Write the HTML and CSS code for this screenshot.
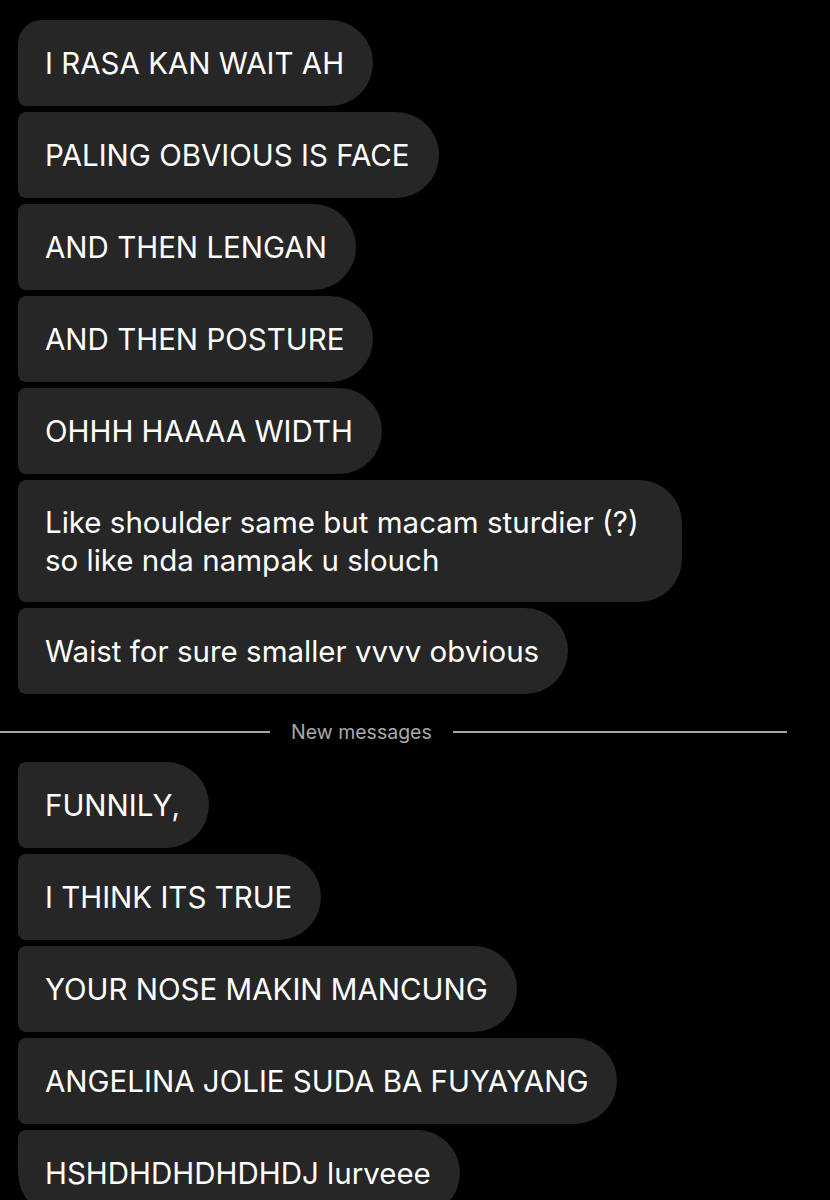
FILE: index.html
```html
<!DOCTYPE html>
<html>
<head>
    <title>Chat</title>
    <link rel="stylesheet" href="styles.css">
</head>
<body>
    <div class="thread">
        <div class="group">
            <div class="bubble first">I RASA KAN WAIT AH</div>
            <div class="bubble">PALING OBVIOUS IS FACE</div>
            <div class="bubble">AND THEN LENGAN</div>
            <div class="bubble">AND THEN POSTURE</div>
            <div class="bubble">OHHH HAAAA WIDTH</div>
            <div class="bubble multi">Like shoulder same but macam sturdier (?) so like nda nampak u slouch</div>
            <div class="bubble">Waist for sure smaller vvvv obvious</div>
        </div>

        <div class="divider">
            <span class="line left"></span>
            <span class="label">New messages</span>
            <span class="line right"></span>
        </div>

        <div class="group">
            <div class="bubble">FUNNILY,</div>
            <div class="bubble">I THINK ITS TRUE</div>
            <div class="bubble">YOUR NOSE MAKIN MANCUNG</div>
            <div class="bubble">ANGELINA JOLIE SUDA BA FUYAYANG</div>
            <div class="bubble last">HSHDHDHDHDHDJ lurveee</div>
        </div>
    </div>
</body>
</html>
```

FILE: styles.css
```css
body { margin: 0; background: #000; color: #fff; font-family: Inter, "Noto Sans", sans-serif; overflow: hidden; }
.thread { padding: 20px 0 0 0; }
.group { display: flex; flex-direction: column; align-items: flex-start; gap: 6px; padding-left: 18px; }
.bubble { box-sizing: border-box; max-width: 664px; background: #262626; font-size: 29.5px; line-height: 36px; padding: 25px 29px 25px 27px; border-radius: 8px 43px 43px 8px; }
.bubble.multi { line-height: 38px; padding: 23px 29px 23px 27px; }
.bubble.first { border-top-left-radius: 24px; }
.bubble.last { border-bottom-left-radius: 43px; }
.divider { display: flex; align-items: center; height: 68px; padding: 8px 43px 0 0; box-sizing: border-box; }
.line { height: 2px; background: #a6a6a6; }
.line.left { width: 270px; }
.line.right { flex: 1; }
.label { margin: 0 21px; font-size: 19.5px; color: #a8a8a8; }
```
